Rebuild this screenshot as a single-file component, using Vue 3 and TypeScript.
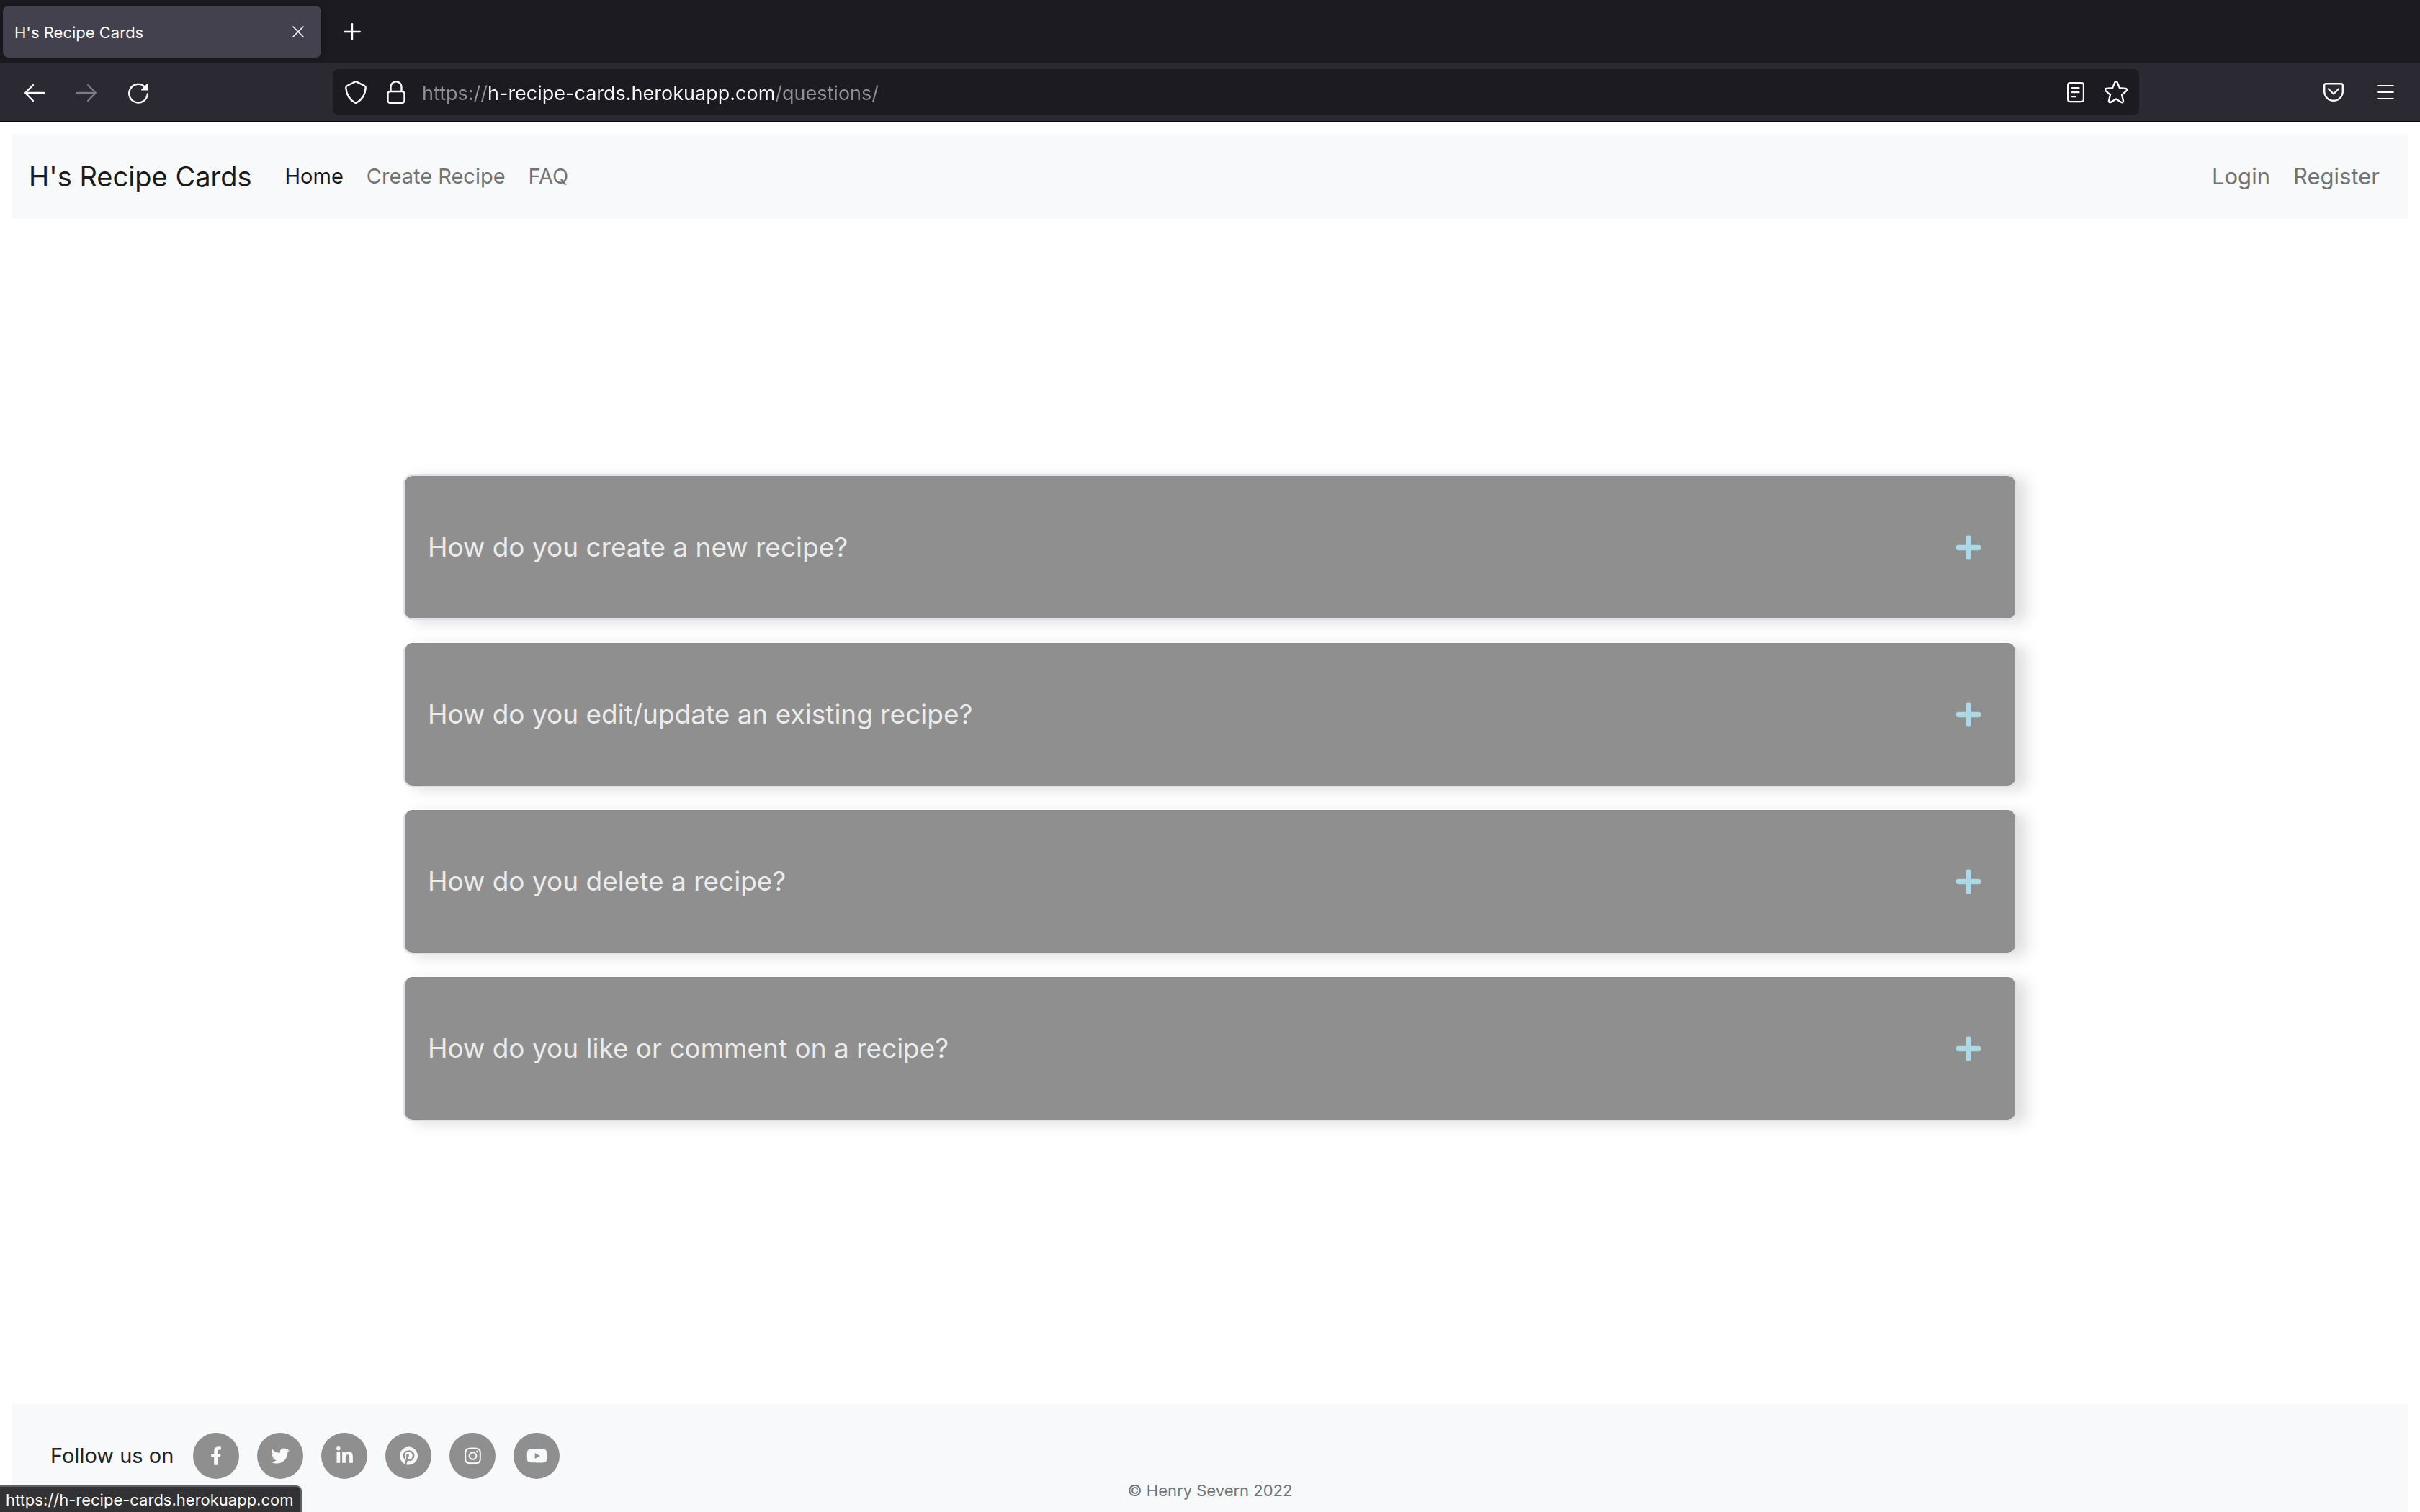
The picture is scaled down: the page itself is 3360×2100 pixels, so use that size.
<script setup lang="ts">
import { ref } from 'vue'

interface NavLink {
  label: string
  active?: boolean
}

interface SocialLink {
  name: string
  viewBox: string
  width: number
  path: string
}

const address = ref('https://h-recipe-cards.herokuapp.com/questions/')

const mainLinks: NavLink[] = [
  { label: 'Home', active: true },
  { label: 'Create Recipe' },
  { label: 'FAQ' },
]

const accountLinks: NavLink[] = [{ label: 'Login' }, { label: 'Register' }]

const questions: string[] = [
  'How do you create a new recipe?',
  'How do you edit/update an existing recipe?',
  'How do you delete a recipe?',
  'How do you like or comment on a recipe?',
]

const socials: SocialLink[] = [
  {
    name: 'Facebook',
    viewBox: '0 0 320 512',
    width: 16,
    path: 'M279.14 288l14.22-92.66h-88.91v-60.13c0-25.35 12.42-50.06 52.24-50.06h40.42V6.26S260.43 0 225.36 0c-73.22 0-121.08 44.38-121.08 124.72v70.62H22.89V288h81.39v224h100.17V288z',
  },
  {
    name: 'Twitter',
    viewBox: '0 0 512 512',
    width: 26,
    path: 'M459.37 151.716c.325 4.548.325 9.097.325 13.645 0 138.72-105.583 298.558-298.558 298.558-59.452 0-114.68-17.219-161.137-47.106 8.447.974 16.568 1.299 25.34 1.299 49.055 0 94.213-16.568 130.274-44.832-46.132-.975-84.792-31.188-98.112-72.772 6.498.974 12.995 1.624 19.818 1.624 9.421 0 18.843-1.3 27.614-3.573-48.081-9.747-84.143-51.98-84.143-102.985v-1.299c13.969 7.797 30.214 12.67 47.431 13.319-28.264-18.843-46.781-51.005-46.781-87.391 0-19.492 5.197-37.36 14.294-52.954 51.655 63.675 129.3 105.258 216.365 109.807-1.624-7.797-2.599-15.918-2.599-24.04 0-57.828 46.782-104.934 104.934-104.934 30.213 0 57.502 12.67 76.67 33.137 23.715-4.548 46.456-13.32 66.599-25.34-7.798 24.366-24.366 44.833-46.132 57.827 21.117-2.273 41.584-8.122 60.426-16.243-14.292 20.791-32.161 39.308-52.628 54.253z',
  },
  {
    name: 'LinkedIn',
    viewBox: '0 0 448 512',
    width: 23,
    path: 'M100.28 448H7.4V148.9h92.88zM53.79 108.1C24.09 108.1 0 83.5 0 53.8a53.79 53.79 0 0 1 107.58 0c0 29.7-24.1 54.3-53.79 54.3zM447.9 448h-92.68V302.4c0-34.7-.7-79.2-48.29-79.2-48.29 0-55.69 37.7-55.69 76.7V448h-92.78V148.9h89.08v40.8h1.3c12.4-23.5 42.69-48.3 87.88-48.3 94 0 111.28 61.9 111.28 142.3V448z',
  },
  {
    name: 'Pinterest',
    viewBox: '0 0 496 512',
    width: 25,
    path: 'M496 256c0 137-111 248-248 248-25.6 0-50.2-3.9-73.4-11.1 10.1-16.5 25.2-43.5 30.8-65 3-11.6 15.4-59 15.4-59 8.1 15.4 31.7 28.5 56.8 28.5 74.8 0 128.7-68.8 128.7-154.3 0-81.9-66.9-143.2-152.9-143.2-107 0-163.9 71.8-163.9 150.1 0 36.4 19.4 81.7 50.3 96.1 4.7 2.2 7.2 1.2 8.3-3.3.8-3.4 5-20.3 6.9-28.1.6-2.5.3-4.7-1.7-7.1-10.1-12.5-18.3-35.3-18.3-56.6 0-54.7 41.4-107.6 112-107.6 60.9 0 103.6 41.5 103.6 100.9 0 67.1-33.9 113.6-78 113.6-24.3 0-42.6-20.1-36.7-44.8 7-29.5 20.5-61.3 20.5-82.6 0-19-10.2-34.9-31.4-34.9-24.9 0-44.9 25.7-44.9 60.2 0 22 7.4 36.8 7.4 36.8s-24.5 103.8-29 123.2c-5 21.4-3 51.6-.9 71.2C65.4 450.9 0 361.1 0 256 0 119 111 8 248 8s248 111 248 248z',
  },
  {
    name: 'Instagram',
    viewBox: '0 0 448 512',
    width: 23,
    path: 'M224.1 141c-63.6 0-114.9 51.3-114.9 114.9s51.3 114.9 114.9 114.9S339 319.5 339 255.9 287.7 141 224.1 141zm0 189.6c-41.1 0-74.7-33.5-74.7-74.7s33.5-74.7 74.7-74.7 74.7 33.5 74.7 74.7-33.6 74.7-74.7 74.7zm146.4-194.3c0 14.9-12 26.8-26.8 26.8-14.9 0-26.8-12-26.8-26.8s12-26.8 26.8-26.8 26.8 12 26.8 26.8zm76.1 27.2c-1.7-35.9-9.9-67.7-36.2-93.9-26.2-26.2-58-34.4-93.9-36.2-37-2.1-147.9-2.1-184.9 0-35.8 1.7-67.6 9.9-93.9 36.1s-34.4 58-36.2 93.9c-2.1 37-2.1 147.9 0 184.9 1.7 35.9 9.9 67.7 36.2 93.9s58 34.4 93.9 36.2c37 2.1 147.9 2.1 184.9 0 35.9-1.7 67.7-9.9 93.9-36.2 26.2-26.2 34.4-58 36.2-93.9 2.1-37 2.1-147.8 0-184.8zM398.8 388c-7.8 19.6-22.9 34.7-42.6 42.6-29.5 11.7-99.5 9-132.1 9s-102.7 2.6-132.1-9c-19.6-7.8-34.7-22.9-42.6-42.6-11.7-29.5-9-99.5-9-132.1s-2.6-102.7 9-132.1c7.8-19.6 22.9-34.7 42.6-42.6 29.5-11.7 99.5-9 132.1-9s102.7-2.6 132.1 9c19.6 7.8 34.7 22.9 42.6 42.6 11.7 29.5 9 99.5 9 132.1s2.7 102.7-9 132.1z',
  },
  {
    name: 'YouTube',
    viewBox: '0 0 576 512',
    width: 29,
    path: 'M549.655 124.083c-6.281-23.65-24.787-42.276-48.284-48.597C458.781 64 288 64 288 64S117.22 64 74.629 75.486c-23.497 6.322-42.003 24.947-48.284 48.597-11.412 42.867-11.412 132.305-11.412 132.305s0 89.438 11.412 132.305c6.281 23.65 24.787 41.5 48.284 47.821C117.22 448 288 448 288 448s170.78 0 213.371-11.486c23.497-6.321 42.003-24.171 48.284-47.821 11.412-42.867 11.412-132.305 11.412-132.305s0-89.438-11.412-132.305zm-317.51 213.508V175.185l142.739 81.205-142.739 81.201z',
  },
]
</script>

<template>
  <div class="window">
    <div class="tab-strip">
      <div class="tab">
        <span class="tab-title">H's Recipe Cards</span>
        <button class="tab-close" type="button" aria-label="Close tab">
          <svg width="16" height="16" viewBox="0 0 16 16" fill="none" stroke="currentColor" stroke-width="1.6" stroke-linecap="round">
            <path d="M1 1l14 14M15 1L1 15" />
          </svg>
        </button>
      </div>
      <button class="new-tab" type="button" aria-label="New tab">
        <svg width="24" height="24" viewBox="0 0 24 24" fill="none" stroke="currentColor" stroke-width="2.4" stroke-linecap="round">
          <path d="M12 1.2v21.6M1.2 12h21.6" />
        </svg>
      </button>
    </div>

    <div class="toolbar">
      <div class="tools">
        <button class="tool" type="button" aria-label="Back">
          <svg width="32" height="32" viewBox="0 0 32 32" fill="none" stroke="currentColor" stroke-width="2.4" stroke-linecap="round" stroke-linejoin="round">
            <path d="M29 17H3.5M14 6L3.2 17 14 28" />
          </svg>
        </button>
        <button class="tool" type="button" aria-label="Forward" disabled>
          <svg width="32" height="32" viewBox="0 0 32 32" fill="none" stroke="currentColor" stroke-width="2.4" stroke-linecap="round" stroke-linejoin="round">
            <path d="M3 17h25.5M18 6l10.8 11L18 28" />
          </svg>
        </button>
        <button class="tool" type="button" aria-label="Reload">
          <svg width="32" height="32" viewBox="0 0 32 32" fill="none" stroke="currentColor" stroke-width="2.4" stroke-linecap="round">
            <path d="M28.8 18.5A12.8 12.8 0 1 1 25 8.6" />
            <path d="M30 4.6v9h-9c-.9 0-1.2-.8-.7-1.4l8.2-8.2c.6-.5 1.5-.2 1.5.6z" fill="currentColor" stroke="none" />
          </svg>
        </button>
      </div>

      <div class="address-bar">
        <button class="site-tool" type="button" aria-label="Tracking protection">
          <svg width="32" height="32" viewBox="0 0 32 32" fill="none" stroke="currentColor" stroke-width="2.4" stroke-linejoin="round">
            <path d="M14.9 1.6a2.4 2.4 0 0 1 2.2 0L28 7c1.2.6 1.8 1.5 1.7 2.9-.5 9-3.5 15.6-12.5 20.6a2.4 2.4 0 0 1-2.4 0C5.8 25.5 2.8 18.9 2.3 9.9 2.2 8.5 2.8 7.600 4 7z" />
          </svg>
        </button>
        <button class="site-tool" type="button" aria-label="Connection secure">
          <svg width="26" height="32" viewBox="0 0 26 32" fill="none" stroke="currentColor" stroke-width="2.4" stroke-linejoin="round">
            <rect x="1.5" y="15" width="23" height="15.8" rx="3" />
            <path d="M5.5 15V8.7a7.5 7.5 0 0 1 15 0V15" />
          </svg>
        </button>
        <input v-model="address" class="address" type="text" aria-label="Address" spellcheck="false" />
        <button class="site-tool" type="button" aria-label="Reader view">
          <svg width="24" height="30" viewBox="0 0 24 30" fill="none" stroke="currentColor" stroke-width="2.2" stroke-linecap="round">
            <rect x="1.1" y="2.1" width="21.8" height="26" rx="3" />
            <path d="M7 9.2h9.5M7 15.2h9.5M7 21.2h5" />
          </svg>
        </button>
        <button class="site-tool" type="button" aria-label="Bookmark this page">
          <svg width="32" height="32" viewBox="0 0 32 32" fill="none" stroke="currentColor" stroke-width="2.4" stroke-linejoin="round">
            <path d="M14.4 2.3a1.8 1.8 0 0 1 3.2 0l3.4 7.9 8.4.8a1.8 1.8 0 0 1 1 3.1l-6.3 5.6 1.9 8.3a1.8 1.8 0 0 1-2.7 1.9L16 25.5l-7.3 4.4A1.8 1.8 0 0 1 6 28l1.9-8.3-6.3-5.6a1.8 1.8 0 0 1 1-3.1l8.4-.8z" />
          </svg>
        </button>
      </div>

      <div class="tools">
        <button class="tool" type="button" aria-label="Save to Pocket">
          <svg width="28" height="28" viewBox="0 0 28 28" fill="none" stroke="currentColor" stroke-width="2.4" stroke-linecap="round" stroke-linejoin="round">
            <path d="M3.2 2.2h21.6a2 2 0 0 1 2 2V13a12.8 12.8 0 0 1-25.6 0V4.2a2 2 0 0 1 2-2z" />
            <path d="M7 9.5l7 7 7-7" />
          </svg>
        </button>
        <button class="tool" type="button" aria-label="Open application menu">
          <svg width="24" height="24" viewBox="0 0 24 24" fill="none" stroke="currentColor" stroke-width="2.2" stroke-linecap="round">
            <path d="M1.2 3h21.6M1.2 12h21.6M1.2 21h21.6" />
          </svg>
        </button>
      </div>
    </div>

    <div class="page">
      <nav class="navbar" aria-label="Site">
        <a class="brand" href="#">H's Recipe Cards</a>
        <ul class="links">
          <li v-for="link in mainLinks" :key="link.label">
            <a href="#" :class="{ active: link.active }">{{ link.label }}</a>
          </li>
        </ul>
        <ul class="links account">
          <li v-for="link in accountLinks" :key="link.label">
            <a href="#">{{ link.label }}</a>
          </li>
        </ul>
      </nav>

      <main class="content">
        <div class="accordion">
          <button v-for="question in questions" :key="question" class="question" type="button" aria-expanded="false">
            <span>{{ question }}</span>
            <svg width="34" height="39" viewBox="0 0 448 512" fill="#add8e6" aria-hidden="true">
              <path d="M416 208H272V64c0-17.67-14.33-32-32-32h-32c-17.67 0-32 14.33-32 32v144H32c-17.67 0-32 14.33-32 32v32c0 17.67 14.33 32 32 32h144v144c0 17.67 14.33 32 32 32h32c17.67 0 32-14.33 32-32V304h144c17.67 0 32-14.33 32-32v-32c0-17.67-14.33-32-32-32z" />
            </svg>
          </button>
        </div>
      </main>

      <footer class="footer">
        <div class="follow">
          <span class="follow-label">Follow us on</span>
          <a v-for="social in socials" :key="social.name" class="social" href="#" :aria-label="social.name">
            <svg :width="social.width" height="26" :viewBox="social.viewBox" fill="currentColor">
              <path :d="social.path" />
            </svg>
          </a>
        </div>
        <p class="copyright">© Henry Severn 2022</p>
      </footer>
    </div>

    <div class="status">https://h-recipe-cards.herokuapp.com</div>
  </div>
</template>

<style>
body {
  margin: 0;
  background: #fff;
}
</style>

<style scoped>
.window {
  display: flex;
  flex-direction: column;
  min-height: 100vh;
  font-family: Inter, "Liberation Sans", sans-serif;
  font-size: 29px;
  line-height: 48px;
  color: #212529;
}

button {
  display: flex;
  align-items: center;
  justify-content: center;
  margin: 0;
  padding: 0;
  border: 0;
  background: none;
  color: inherit;
  font: inherit;
}

a {
  color: inherit;
  text-decoration: none;
}

svg {
  display: block;
  flex: none;
}

.tab-strip {
  display: flex;
  align-items: center;
  height: 88px;
  padding-left: 4px;
  background: #1c1b22;
  color: #fbfbfe;
}

.tab {
  box-sizing: border-box;
  display: flex;
  align-items: center;
  justify-content: space-between;
  width: 442px;
  height: 72px;
  padding: 0 8px 0 16px;
  border-radius: 8px;
  background: #42414d;
  box-shadow: 0 0 8px rgba(0, 0, 0, 0.4);
}

.tab-title {
  padding-top: 2px;
  font-size: 22px;
  line-height: 32px;
}

.tab-close {
  width: 48px;
  height: 48px;
}

.new-tab {
  width: 64px;
  height: 64px;
  margin-left: 11px;
}

.toolbar {
  display: flex;
  align-items: center;
  height: 80px;
  padding: 0 16px;
  border-bottom: 2px solid #0c0c0d;
  background: #2b2a33;
  color: #fbfbfe;
}

.tools {
  display: flex;
  gap: 8px;
}

.tool {
  width: 64px;
  height: 64px;
}

.tool:disabled {
  color: #7c7b81;
}

.address-bar {
  box-sizing: border-box;
  display: flex;
  flex: 1;
  align-items: center;
  height: 64px;
  margin: 0 238px;
  padding: 0 4px;
  border-radius: 8px;
  background: #1c1b22;
}

.site-tool {
  width: 56px;
  height: 56px;
}

/* The gradient dims the scheme and the path around the host name. */
.address {
  box-sizing: border-box;
  flex: 1;
  min-width: 0;
  height: 56px;
  margin: 0;
  padding: 2px 8px 0;
  border: 0;
  outline: 0;
  background: linear-gradient(90deg, #8f8f95 98px, #fbfbfe 98px, #fbfbfe 499px, #8f8f95 499px);
  background-clip: text;
  -webkit-background-clip: text;
  color: transparent;
  font-family: inherit;
  font-size: 27px;
}

.page {
  display: flex;
  flex: 1;
  flex-direction: column;
  padding: 16px 16px 0;
}

.navbar {
  display: flex;
  align-items: center;
  height: 118px;
  padding: 0 24px;
  background: #f8f9fb;
}

.brand {
  margin-right: 30px;
  font-size: 38px;
  line-height: 60px;
  color: #1a1a1b;
}

.links {
  display: flex;
  margin: 0;
  padding: 0;
  list-style: none;
  color: #727374;
}

.links a {
  display: block;
  padding: 0 16px;
}

.links .active {
  color: #1a1a1b;
}

.account {
  margin-left: auto;
  font-size: 31px;
}

.content {
  flex: 1;
  padding: 355px 0 80px;
}

.accordion {
  display: flex;
  flex-direction: column;
  gap: 32px;
  width: calc(200vw / 3);
  margin: 0 auto;
}

.question {
  justify-content: space-between;
  padding: 69px 48px 69px 32px;
  border: 2px solid #dee2e6;
  border-top: 0;
  border-radius: 12px;
  background: #8f8f8f;
  background-clip: padding-box;
  box-shadow: 14px 4px 20px rgba(0, 0, 0, 0.13);
  color: #ebebeb;
  font-size: 37px;
  line-height: 60px;
  text-align: left;
}

.question:first-child {
  border-top: 2px solid #dee2e6;
}

.footer {
  padding: 40px 54px 14px;
  background: #f8f9fb;
}

.follow {
  display: flex;
  align-items: center;
  gap: 25px;
}

.follow-label {
  margin-right: 2px;
}

.social {
  display: flex;
  align-items: center;
  justify-content: center;
  width: 64px;
  height: 64px;
  border-radius: 50%;
  background: #8f8f8f;
  color: #f8f9fb;
}

.copyright {
  margin: 0;
  color: #6c757d;
  font-size: 22px;
  line-height: 32px;
  text-align: center;
}

/* Link preview that the browser lays over the page's bottom corner. */
.status {
  position: fixed;
  bottom: 0;
  left: 0;
  padding: 3px 9px 2px 8px;
  border-top: 2px solid #5f5f64;
  border-right: 2px solid #5f5f64;
  border-top-right-radius: 8px;
  background: #323234;
  color: #f9f9fa;
  font-size: 22px;
  line-height: 30px;
}
</style>
